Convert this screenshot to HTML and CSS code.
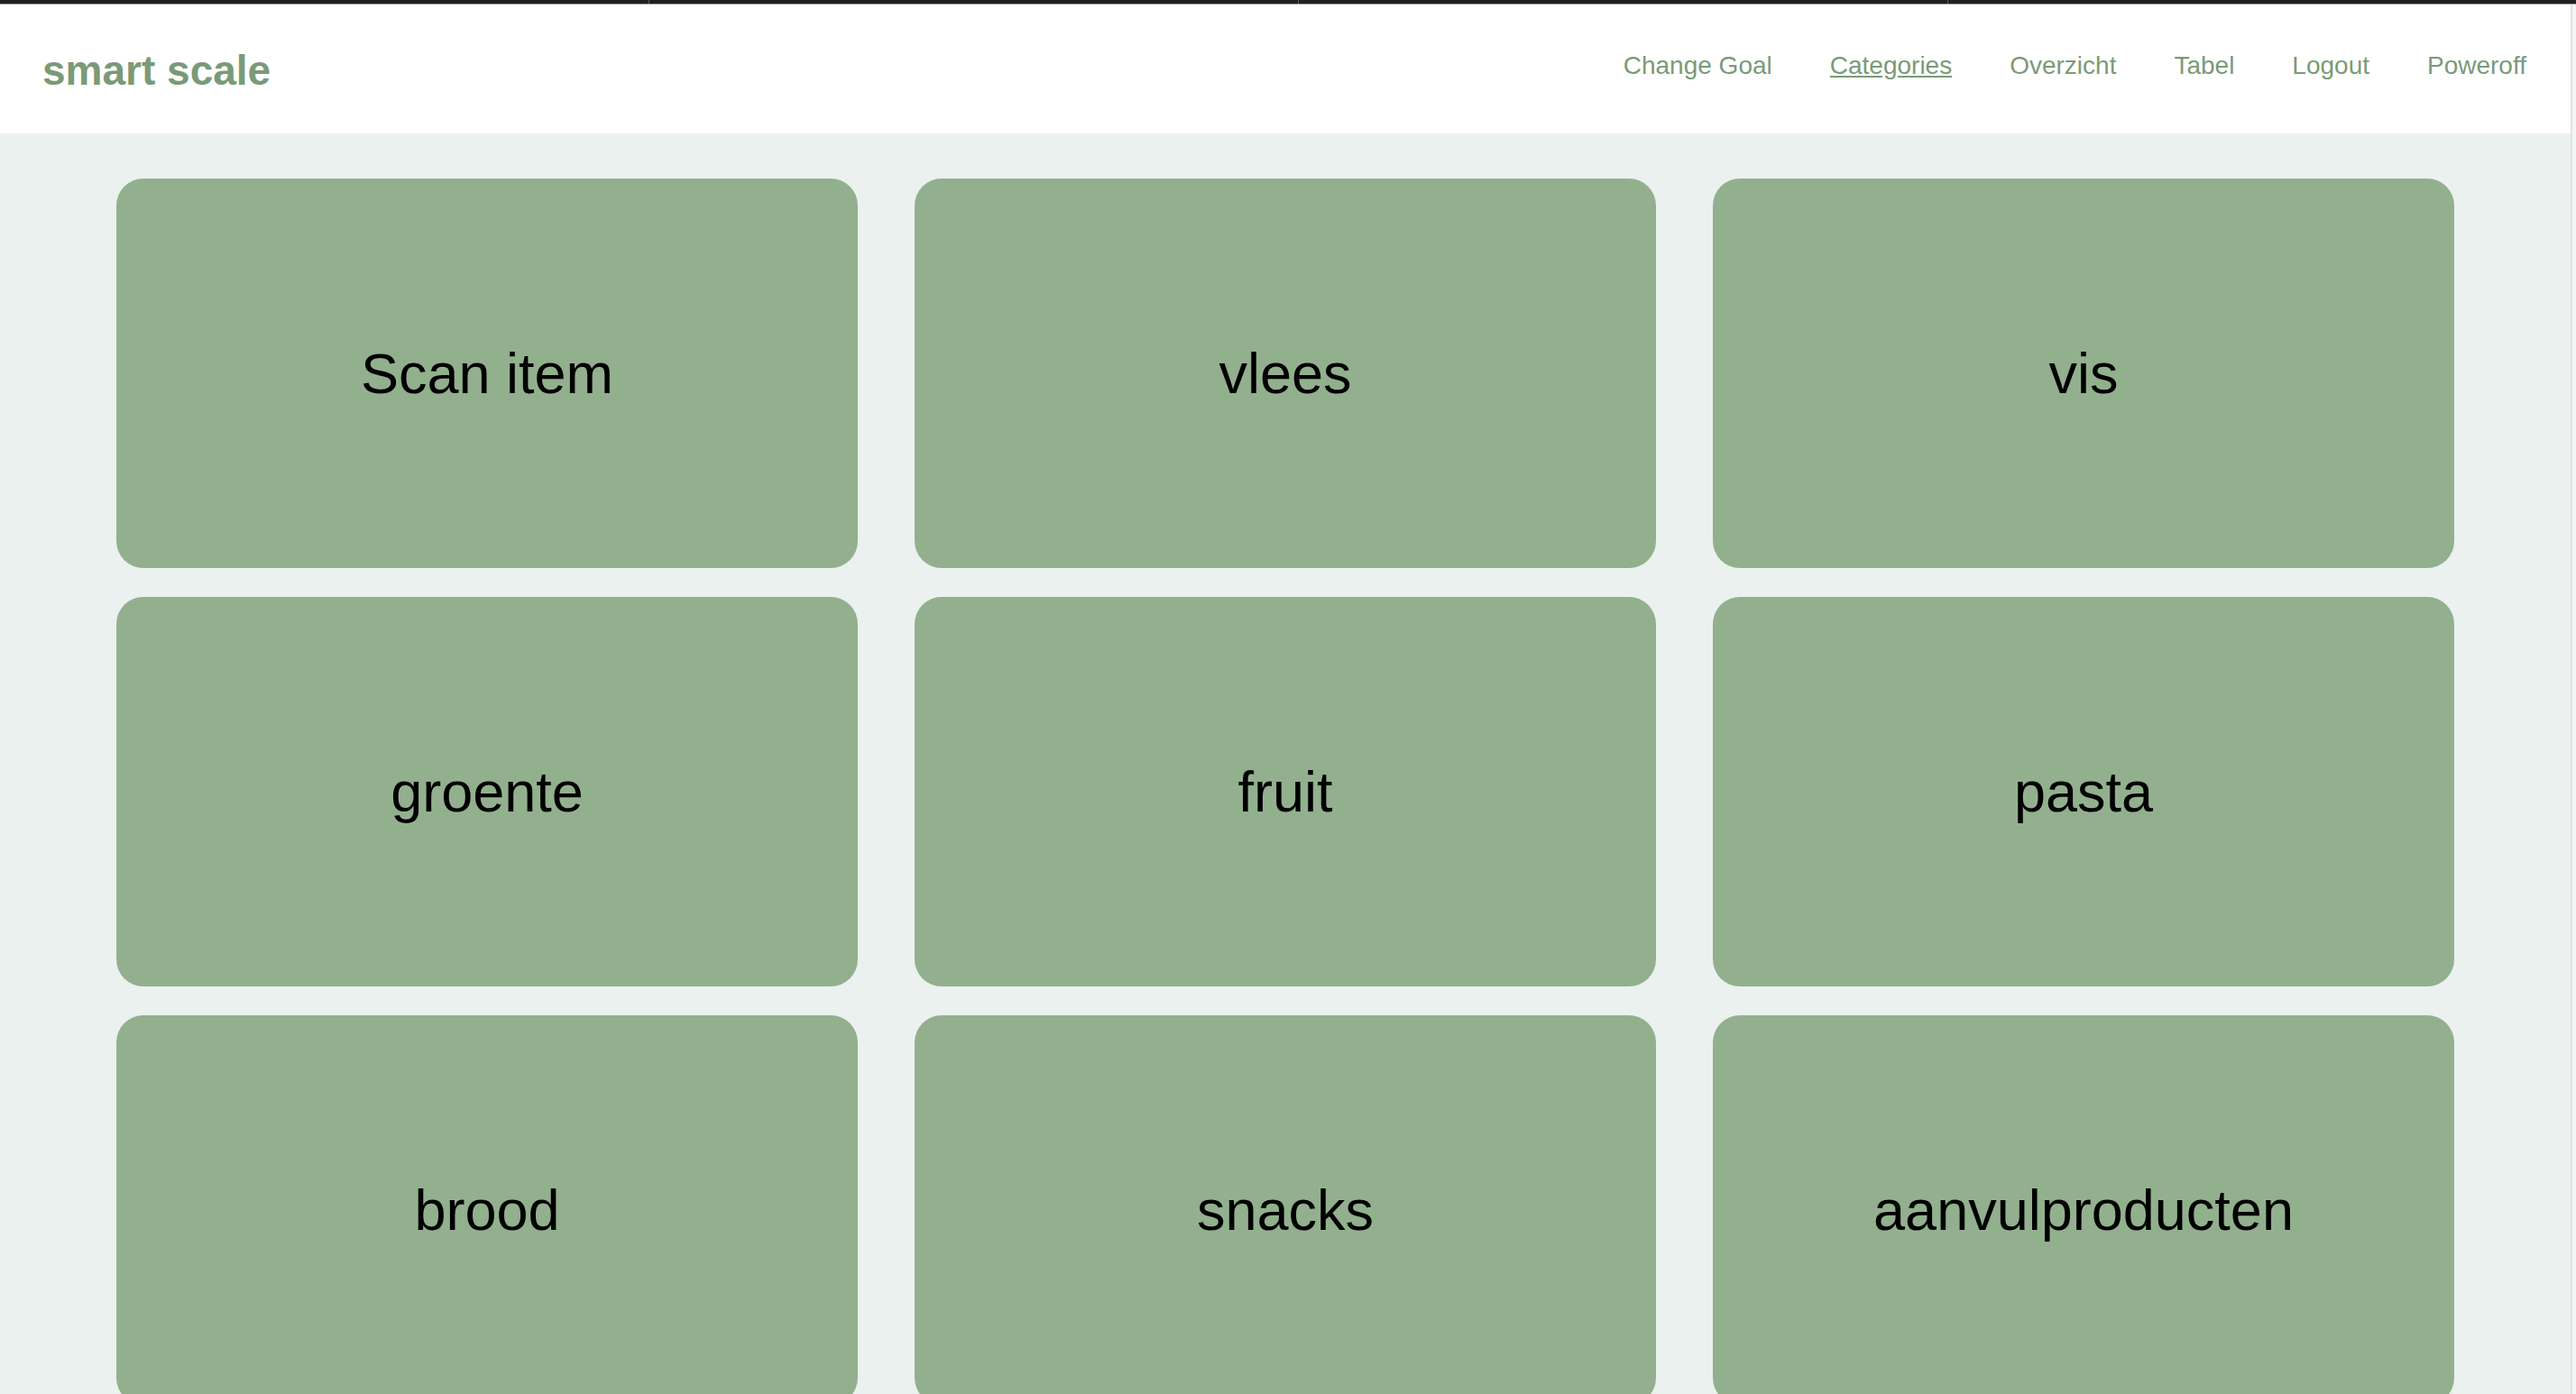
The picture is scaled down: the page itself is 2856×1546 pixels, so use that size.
FILE: index.html
```html
<!DOCTYPE html>
<html>
<head>
  <meta charset="utf-8">
  <title>smart scale</title>
  <link rel="stylesheet" href="styles.css">
</head>
<body>

  <div class="topbar">
    <span class="tab"></span>
    <span class="tab"></span>
    <span class="tab"></span>
  </div>

  <div class="venster">
    <div class="pagina">
      <header class="kop">
        <a class="logo" href="#">smart scale</a>
        <nav class="menu">
          <a href="#">Change Goal</a>
          <a href="#" class="actief">Categories</a>
          <a href="#">Overzicht</a>
          <a href="#">Tabel</a>
          <a href="#">Logout</a>
          <a href="#">Poweroff</a>
        </nav>
      </header>

      <div class="categorieen">
        <a class="tegel" href="#">Scan item</a>
        <a class="tegel" href="#">vlees</a>
        <a class="tegel" href="#">vis</a>
        <a class="tegel" href="#">groente</a>
        <a class="tegel" href="#">fruit</a>
        <a class="tegel" href="#">pasta</a>
        <a class="tegel" href="#">brood</a>
        <a class="tegel" href="#">snacks</a>
        <a class="tegel" href="#">aanvulproducten</a>
      </div>
    </div>
    <div class="scrollbalk"></div>
  </div>

</body>
</html>
```

FILE: styles.css
```css
html, body {
  height: 100%;
  overflow: hidden;
}

body {
  font-family: "Liberation Sans", Arial, sans-serif;
  margin: 0;
  background: #ebf1ef;
  display: flex;
  flex-direction: column;
}

/* donkere balk bovenaan */
.topbar {
  height: 4px;
  background: #1f1f1f;
  border-bottom: 1px solid #9a9a9a;
  display: flex;
  flex-shrink: 0;
}

.tab {
  width: 719px;
  border-right: 1px solid #5a5a5a;
}

.venster {
  flex: 1;
  display: flex;
  min-height: 0;
}

.pagina {
  flex: 1;
  min-width: 0;
}

.scrollbalk {
  width: 4px;
  border-left: 2px solid #e2e4e3;
  background: #f4f5f5;
}

.kop {
  height: 143px;
  background: #fff;
  display: flex;
  align-items: center;
  justify-content: space-between;
  padding: 0 49px 0 47px;
}

.logo {
  color: #7a9a78;
  font-size: 46px;
  font-weight: bold;
  text-decoration: none;
  margin-top: 2px;
}

.menu {
  display: flex;
  gap: 64px;
  margin-top: -8px;
}

.menu a {
  color: #7a9a78;
  font-size: 28px;
  text-decoration: none;
}

.menu a.actief {
  text-decoration: underline;
}

.categorieen {
  display: grid;
  grid-template-columns: repeat(3, 1fr);
  gap: 32px 63px;
  padding: 50px 129px;
}

.tegel {
  height: 432px;
  background: #92b08e;
  border-radius: 30px;
  display: flex;
  align-items: center;
  justify-content: center;
  color: #000;
  font-size: 63px;
  text-decoration: none;
}
```
